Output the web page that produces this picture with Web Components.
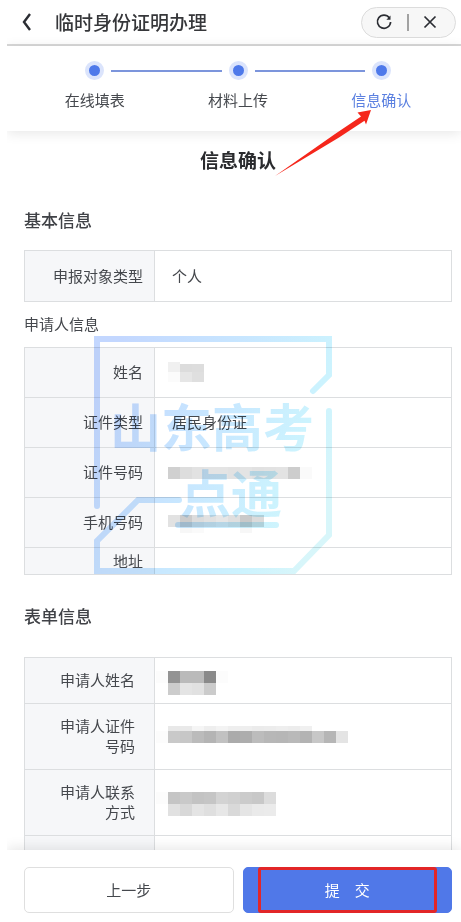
<!DOCTYPE html>
<html lang="zh-CN">
<head>
<meta charset="UTF-8">
<meta name="viewport" content="width=device-width, initial-scale=1">
<title>临时身份证明办理</title>
<style>
  html, body {
    margin: 0;
    height: 100%;
  }
  body {
    font-family: "Noto Sans CJK SC", "Noto Sans", sans-serif;
    font-size: 15px;
    line-height: 20px;
    color: #45484d;
    background: #fff;
  }
</style>
</head>
<body>

<page-shell>
  <nav-bar slot="header" title="临时身份证明办理"></nav-bar>
  <step-bar slot="steps">
    <step-item label="在线填表"></step-item>
    <step-item label="材料上传"></step-item>
    <step-item label="信息确认" active></step-item>
  </step-bar>
  <hint-arrow slot="steps"></hint-arrow>

  <form-section heading="基本信息">
    <info-table size="large">
      <info-row label="申报对象类型">个人</info-row>
    </info-table>
  </form-section>

  <form-section subheading="申请人信息">
    <info-table>
      <info-row label="姓名"><pixel-mosaic rows="0 10 . f0;2 8 . . dc dd;10 10 . fb e6 df"></pixel-mosaic></info-row>
      <info-row label="证件类型">居民身份证</info-row>
      <info-row label="证件号码"><pixel-mosaic rows="5 12 . d0 dd e2 e4 e4 e2 e4 e1 e2 e3 cd fa"></pixel-mosaic></info-row>
      <info-row label="手机号码"><pixel-mosaic rows="3 12 . e2 cb dc e1 e6 df c9 db;15 6 . . f7 fa . . . f7"></pixel-mosaic></info-row>
      <info-row label="地址" compact></info-row>
    </info-table>
    <water-mark slot="overlay"></water-mark>
  </form-section>

  <form-section heading="表单信息">
    <info-table size="form">
      <info-row label="申请人姓名"><pixel-mosaic rows="1 12 fc 93 ba ba 8a fc;13 12 . cc e4 e1 cb"></pixel-mosaic></info-row>
      <info-row label="申请人证件号码"><pixel-mosaic rows="0 5 . e8 e9 f5 ee f3 ee ee eb ec ee ec f0;5 12 fc c9 c7 bb b4 c1 ab ad bc b7 b6 b9 b3 c7 b6 e4"></pixel-mosaic></info-row>
      <info-row label="申请人联系方式"><pixel-mosaic rows="0 12 fc c5 c9 c3 c5 d3 d0 cb c8 dc;12 12 . e1 d8 e4 df e7 d9 e5 ea eb"></pixel-mosaic></info-row>
      <info-row label="申请人地址"></info-row>
    </info-table>
  </form-section>

  <action-bar slot="footer"></action-bar>
</page-shell>

<script>
class PageShell extends HTMLElement {
  constructor() {
    super();
    this.attachShadow({ mode: 'open' });
    this.shadowRoot.innerHTML = `
      <style>
        :host {
          display: flex;
          flex-direction: column;
          position: relative;
          height: 100vh;
          margin-left: 7px;
          overflow: hidden;
        }
        .steps {
          position: relative;
          z-index: 2;
        }
        main {
          flex: 1;
          min-height: 0;
          overflow-y: auto;
          scrollbar-width: none;
          padding: 17px 9px 0 17px;
        }
        h1 {
          margin: 0 0 36px;
          font-size: 19px;
          line-height: 24px;
          font-weight: 700;
          text-align: center;
          color: #2a2b2e;
        }
      </style>
      <slot name="header"></slot>
      <div class="steps"><slot name="steps"></slot></div>
      <main>
        <h1>信息确认</h1>
        <slot></slot>
      </main>
      <slot name="footer"></slot>
    `;
  }
}

class NavBar extends HTMLElement {
  connectedCallback() {
    this.attachShadow({ mode: 'open' });
    this.shadowRoot.innerHTML = `
      <style>
        :host {
          display: block;
          flex: none;
        }
        header {
          display: flex;
          align-items: center;
          height: 44px;
          padding: 0 5px 0 9px;
          border-bottom: 2px solid #d8d8d8;
        }
        button {
          display: flex;
          padding: 0;
          border: 0;
          background: none;
          color: #2b2d33;
          cursor: pointer;
        }
        svg {
          fill: none;
          stroke: currentColor;
          stroke-width: 1.7;
        }
        .title {
          flex: 1;
          margin-left: 15px;
          font-size: 19px;
          line-height: 24px;
          font-weight: 500;
          color: #36373a;
        }
        .capsule {
          display: flex;
          align-items: center;
          justify-content: space-between;
          box-sizing: border-box;
          width: 95px;
          height: 31px;
          padding: 0 18px 0 13px;
          border: 1px solid #dcdcdc;
          border-radius: 16px;
          background: #f7f7f7;
        }
        .divider {
          width: 2px;
          height: 17px;
          background: #a2a2a2;
        }
      </style>
      <header>
        <button type="button" aria-label="返回">
          <svg width="24" height="24" viewBox="0 0 24 24"><path d="M14 4 L8 12 L14 20" stroke-width="2.4"/></svg>
        </button>
        <div class="title">${this.getAttribute('title')}</div>
        <div class="capsule">
          <button type="button" aria-label="刷新">
            <svg width="18" height="18" viewBox="0 0 18 18">
              <path d="M14.3 4.7 A6.6 6.6 0 1 0 15.6 9"/>
              <path d="M15.5 2.5 V6.7 H11.4 Z" fill="currentColor" stroke="none"/>
            </svg>
          </button>
          <span class="divider"></span>
          <button type="button" aria-label="关闭">
            <svg width="14" height="14" viewBox="0 0 14 14"><path d="M1.5 1.5 L12.5 12.5 M12.5 1.5 L1.5 12.5"/></svg>
          </button>
        </div>
      </header>
    `;
    this.removeAttribute('title');
  }
}

class StepBar extends HTMLElement {
  constructor() {
    super();
    this.attachShadow({ mode: 'open' });
    this.shadowRoot.innerHTML = `
      <style>
        :host {
          display: flex;
          padding: 15px 8px 21px 16px;
          background: #fff;
          box-shadow: 0 2px 12px rgba(0, 0, 0, 0.1);
        }
        ::slotted(step-item) {
          flex: 1;
        }
      </style>
      <slot></slot>
    `;
  }
}

class StepItem extends HTMLElement {
  connectedCallback() {
    this.attachShadow({ mode: 'open' });
    this.shadowRoot.innerHTML = `
      <style>
        :host {
          display: block;
          text-align: center;
        }
        .track {
          display: flex;
          align-items: center;
          gap: 7px;
          margin-bottom: 10px;
        }
        .line {
          flex: 1;
          height: 2px;
          background: #7c95dc;
        }
        :host(:first-of-type) .line:first-child,
        :host(:last-of-type) .line:last-child {
          visibility: hidden;
        }
        .dot {
          width: 11px;
          height: 11px;
          border: 4px solid #dbe4fc;
          border-radius: 50%;
          background: #4e79ea;
        }
        :host([active]) .label {
          color: #5b80e0;
        }
      </style>
      <div class="track">
        <span class="line"></span><span class="dot"></span><span class="line"></span>
      </div>
      <div class="label">${this.getAttribute('label')}</div>
    `;
  }
}

// red pointer over the current step
class HintArrow extends HTMLElement {
  constructor() {
    super();
    this.attachShadow({ mode: 'open' });
    this.shadowRoot.innerHTML = `
      <style>
        :host {
          position: absolute;
          top: 64px;
          right: 90px;
          pointer-events: none;
        }
        svg { display: block; }
      </style>
      <svg width="96" height="67" viewBox="0 0 96 67">
        <path d="M96 0 L82.5 2.6 L86 6.4 L60 24 L0 66 L64 27.5 L89.5 10.8 L91 14.5 Z" fill="#f5261b"/>
      </svg>
    `;
  }
}

class FormSection extends HTMLElement {
  connectedCallback() {
    const heading = this.getAttribute('heading');
    const subheading = this.getAttribute('subheading');
    this.attachShadow({ mode: 'open' });
    this.shadowRoot.innerHTML = `
      <style>
        :host {
          display: block;
        }
        h2 {
          margin: 0;
          padding-bottom: 18px;
          font-size: 17px;
          line-height: 24px;
          font-weight: 500;
          color: #404247;
        }
        :host(:last-of-type) h2 {
          padding: 29px 0 29px;
        }
        h3 {
          margin: 12px 0 13px;
          font-size: 15px;
          line-height: 20px;
          font-weight: 400;
        }
        .body {
          position: relative;
        }
      </style>
      ${heading ? `<h2>${heading}</h2>` : ''}
      ${subheading ? `<h3>${subheading}</h3>` : ''}
      <div class="body">
        <slot></slot>
        <slot name="overlay"></slot>
      </div>
    `;
  }
}

class InfoRow extends HTMLElement {
  constructor() {
    super();
    this.attachShadow({ mode: 'open' });
    this.shadowRoot.innerHTML = `
      <style>
        :host {
          display: block;
          min-height: 20px;
          padding-left: 4px;
        }
        ::slotted(pixel-mosaic) {
          margin-left: -16px;
        }
      </style>
      <slot></slot>
    `;
  }
}

class InfoTable extends HTMLElement {
  connectedCallback() {
    this.attachShadow({ mode: 'open' });
    const rows = [...this.querySelectorAll('info-row')].map((row, i) => {
      row.slot = `row-${i}`;
      return `
        <tr class="${row.hasAttribute('compact') ? 'compact' : ''}">
          <th scope="row">${row.getAttribute('label')}</th>
          <td><slot name="row-${i}"></slot></td>
        </tr>`;
    }).join('');

    this.shadowRoot.innerHTML = `
      <style>
        :host {
          display: block;
        }
        table {
          width: 100%;
          border-collapse: collapse;
          table-layout: fixed;
        }
        th, td {
          border: 1px solid #dcdee0;
          padding: 14px 13px 15px;
          font-weight: 400;
          text-align: left;
          vertical-align: middle;
        }
        th {
          box-sizing: border-box;
          width: 130px;
          padding-left: 0;
          padding-right: 11px;
          background: #f6f7f9;
          text-align: right;
        }
        .compact th, .compact td {
          padding-top: 3px;
          padding-bottom: 3px;
        }
        :host([size="large"]) th, :host([size="large"]) td {
          padding-top: 15px;
          padding-bottom: 15px;
        }
        :host([size="form"]) th, :host([size="form"]) td {
          padding-top: 12px;
          padding-bottom: 13px;
        }
        :host([size="form"]) th {
          padding-left: 24px;
          padding-right: 19px;
        }
      </style>
      <table><tbody>${rows}</tbody></table>
    `;
  }
}

// masked value: each row is "top height" followed by one grey level (hex) per 12px block
class PixelMosaic extends HTMLElement {
  connectedCallback() {
    this.attachShadow({ mode: 'open' });
    const rects = this.getAttribute('rows').split(';').map(line => {
      const [y, h, ...cells] = line.split(' ');
      return cells.map((c, i) => c === '.' ? '' :
        `<rect x="${i * 12}" y="${y}" width="12" height="${h}" fill="#${c}${c}${c}"/>`).join('');
    }).join('');

    this.shadowRoot.innerHTML = `
      <style>
        :host {
          display: block;
          height: 20px;
        }
        svg {
          display: block;
          overflow: visible;
          shape-rendering: crispEdges;
        }
      </style>
      <svg width="200" height="20" aria-hidden="true">${rects}</svg>
    `;
  }
}

class WaterMark extends HTMLElement {
  constructor() {
    super();
    this.attachShadow({ mode: 'open' });
    this.shadowRoot.innerHTML = `
      <style>
        :host {
          position: absolute;
          top: -11px;
          left: 70px;
          pointer-events: none;
          mix-blend-mode: multiply;
        }
        svg { display: block; }
        text {
          font-size: 51px;
          font-weight: 700;
        }
      </style>
      <svg width="238" height="238" viewBox="0 0 238 238">
        <defs>
          <linearGradient id="tint" gradientUnits="userSpaceOnUse" x1="0" y1="60" x2="238" y2="160">
            <stop offset="0" stop-color="#c3d7ff"/>
            <stop offset="0.5" stop-color="#c8e8ff"/>
            <stop offset="0.8" stop-color="#ccf3fe"/>
            <stop offset="1" stop-color="#d8f6fa"/>
          </linearGradient>
        </defs>
        <g fill="none" stroke="url(#tint)" stroke-width="6">
          <path d="M3 170 V3 H235 V39 L219 55" stroke-linecap="round"/>
          <path d="M85 164 H44 L3 205 V235 H200 L235 199 V75" stroke-linecap="round"/>
          <path d="M84 189 H182" stroke-linecap="round"/>
        </g>
        <g fill="url(#tint)">
          <text x="16" y="111">山东高考</text>
          <text x="86" y="177">点通</text>
        </g>
      </svg>
    `;
  }
}

class ActionBar extends HTMLElement {
  constructor() {
    super();
    this.attachShadow({ mode: 'open' });
    this.shadowRoot.innerHTML = `
      <style>
        :host {
          display: flex;
          flex: none;
          gap: 9px;
          position: relative;
          padding: 17px 9px 9px 17px;
          background: #fff;
          box-shadow: 0 -2px 12px rgba(0, 0, 0, 0.1);
        }
        button {
          flex: 1;
          position: relative;
          height: 46px;
          padding: 0;
          border: 1px solid #dfdfdf;
          border-radius: 5px;
          background: #fff;
          font: inherit;
          color: #45484d;
          cursor: pointer;
        }
        .submit {
          border-color: #5078e8;
          background: #5078e8;
          color: #fff;
        }
        .frame {
          position: absolute;
          inset: -1px 14px;
          border: 3px solid #e22628;
          border-radius: 3px;
        }
      </style>
      <button type="button">上一步</button>
      <button type="submit" class="submit">提&emsp;交<span class="frame"></span></button>
    `;
  }
}

customElements.define('page-shell', PageShell);
customElements.define('nav-bar', NavBar);
customElements.define('step-bar', StepBar);
customElements.define('step-item', StepItem);
customElements.define('hint-arrow', HintArrow);
customElements.define('form-section', FormSection);
customElements.define('info-row', InfoRow);
customElements.define('info-table', InfoTable);
customElements.define('pixel-mosaic', PixelMosaic);
customElements.define('water-mark', WaterMark);
customElements.define('action-bar', ActionBar);
</script>
</body>
</html>
